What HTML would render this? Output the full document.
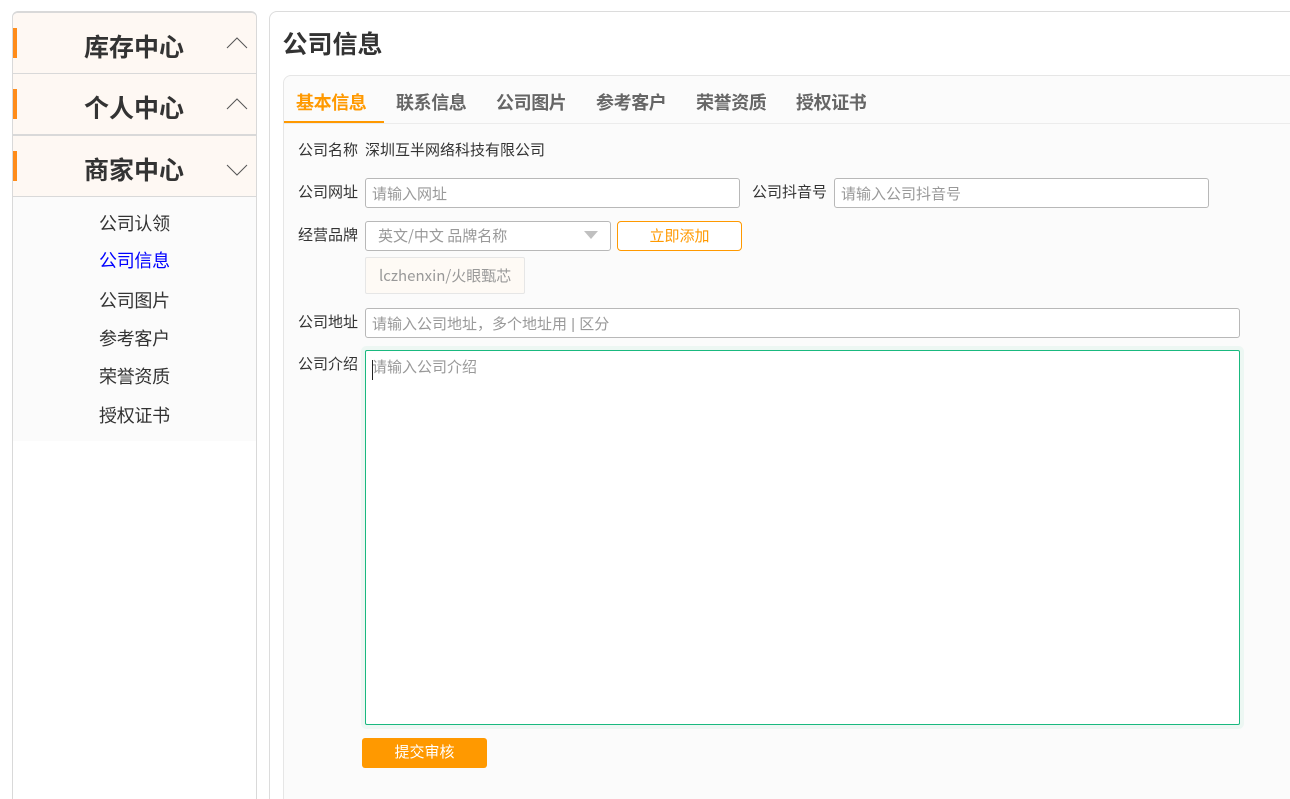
<!DOCTYPE html>
<html lang="zh"><head><meta charset="utf-8"><title>公司信息</title>
<style>
html,body{margin:0;padding:0;background:#fff;width:1290px;height:799px;overflow:hidden}
body{position:relative;font-family:"Liberation Sans","Noto Sans CJK SC",sans-serif;color:#333}
div,span{position:absolute;box-sizing:border-box;white-space:nowrap}
.h{left:13px;width:243px;background:#fef8f3;border-bottom:1px solid #d9d9d9}
.bar{left:13px;width:4px;height:30px;background:#ff8c1a}
.ht{left:84px;width:100px;font-size:25px;line-height:30px;font-weight:700;color:#333}
.m{left:99px;font-size:18px;letter-spacing:-.3px;line-height:24px;color:#333}
.tab{top:90px;font-size:18px;letter-spacing:-.4px;line-height:26px;font-weight:700;color:#666}
.l{font-size:15px;line-height:20px;color:#333}
.i{background:#fff;border:1px solid #b8b8b8;border-radius:3px;height:30px}
.p{font-size:15px;line-height:20px;color:#999}
.n{font-family:"Noto Sans CJK SC","Liberation Sans",sans-serif}
svg{position:absolute}
</style></head><body>
<div style="left:12px;top:11px;width:245px;height:800px;border:1px solid #d9d9d9;border-top-width:2px;border-radius:6px 6px 0 0;background:#fff"></div>
<div class="h" style="top:13px;height:61px;border-radius:5px 5px 0 0"></div>
<div class="h" style="top:74px;height:62px;border-bottom-width:2px"></div>
<div class="h" style="top:136px;height:61px"></div>
<div class="bar" style="top:28px"></div><div class="bar" style="top:89px"></div><div class="bar" style="top:151px"></div>
<div class="ht" style="top:33px">库存中心</div>
<div class="ht" style="top:94px">个人中心</div>
<div class="ht" style="top:156px">商家中心</div>
<svg style="left:226px;top:36px" width="22" height="14"><path d="M1 12L11 2L21 12" fill="none" stroke="#555" stroke-width="1"/></svg>
<svg style="left:226px;top:97px" width="22" height="14"><path d="M1 12L11 2L21 12" fill="none" stroke="#555" stroke-width="1"/></svg>
<svg style="left:226px;top:163px" width="22" height="14"><path d="M1 2L11 12L21 2" fill="none" stroke="#555" stroke-width="1"/></svg>
<div style="left:13px;top:197px;width:243px;height:244px;background:#fbfbfb"></div>
<div class="m" style="top:212px">公司认领</div>
<div class="m" style="top:249px;color:#00f">公司信息</div>
<div class="m" style="top:289px">公司图片</div>
<div class="m" style="top:327px">参考客户</div>
<div class="m" style="top:365px">荣誉资质</div>
<div class="m" style="top:404px">授权证书</div>

<div style="left:269px;top:11px;width:1040px;height:800px;border:1px solid #dcdcdc;border-radius:8px 0 0 0;background:#fff"></div>
<div style="left:282.5px;top:29px;font-size:25px;line-height:32px;font-weight:700;color:#333">公司信息</div>
<div style="left:283px;top:75px;width:1020px;height:740px;border:1px solid #e6e6e6;border-radius:8px 0 0 0;background:#fbfbfb"></div>
<div style="left:284px;top:123px;width:1006px;height:1px;background:#ececec"></div>
<div style="left:284px;top:121px;width:100px;height:2px;background:#ff9900"></div>
<div class="tab" style="left:296px;color:#ff9900">基本信息</div>
<div class="tab" style="left:396px">联系信息</div>
<div class="tab" style="left:496px">公司图片</div>
<div class="tab" style="left:596px">参考客户</div>
<div class="tab" style="left:696px">荣誉资质</div>
<div class="tab" style="left:796px">授权证书</div>

<div class="l" style="left:298px;top:141px">公司名称</div>
<div class="l" style="left:365px;top:141px">深圳互半网络科技有限公司</div>
<div class="l" style="left:298px;top:183px">公司网址</div>
<div class="i" style="left:365px;top:178px;width:375px"></div>
<div class="p" style="left:372px;top:185px">请输入网址</div>
<div class="l" style="left:752px;top:183px">公司抖音号</div>
<div class="i" style="left:834px;top:178px;width:375px"></div>
<div class="p" style="left:841px;top:185px">请输入公司抖音号</div>

<div class="l" style="left:298px;top:226px">经营品牌</div>
<div class="i" style="left:365px;top:221px;width:246px"></div>
<div class="p n" style="left:378px;top:226px">英文/中文 品牌名称</div>
<svg style="left:584px;top:231px" width="14" height="9"><path d="M0 0H14L7 8Z" fill="#c0c0c0"/></svg>
<div style="left:617px;top:221px;width:125px;height:30px;border:1px solid #ff9900;border-radius:4px;background:#fff;color:#ff9900;font-size:15px;line-height:29px;text-align:center">立即添加</div>
<div class="n" style="left:365px;top:257px;width:160px;height:37px;border:1px solid #e6e6e6;border-radius:2px;background:#fefaf5;color:#999;font-size:15px;line-height:35px;padding-left:13px">lczhenxin/火眼甄芯</div>

<div class="l" style="left:298px;top:313px">公司地址</div>
<div class="i" style="left:365px;top:308px;width:875px"></div>
<div class="p" style="left:372px;top:315px">请输入公司地址，多个地址用 | 区分</div>

<div class="l" style="left:298px;top:355px">公司介绍</div>
<div style="left:365px;top:350px;width:875px;height:375px;background:#fff;border:1px solid #19b97f;border-radius:2px;box-shadow:0 0 0 4px #edf7f3"></div>
<div class="p" style="left:372px;top:358px">请输入公司介绍</div>
<div style="left:372px;top:360px;width:1px;height:20px;background:#222"></div>

<div style="left:362px;top:738px;width:125px;height:30px;background:#ff9900;border-radius:3px;color:#fff;font-size:15px;line-height:30px;text-align:center">提交审核</div>
</body></html>
